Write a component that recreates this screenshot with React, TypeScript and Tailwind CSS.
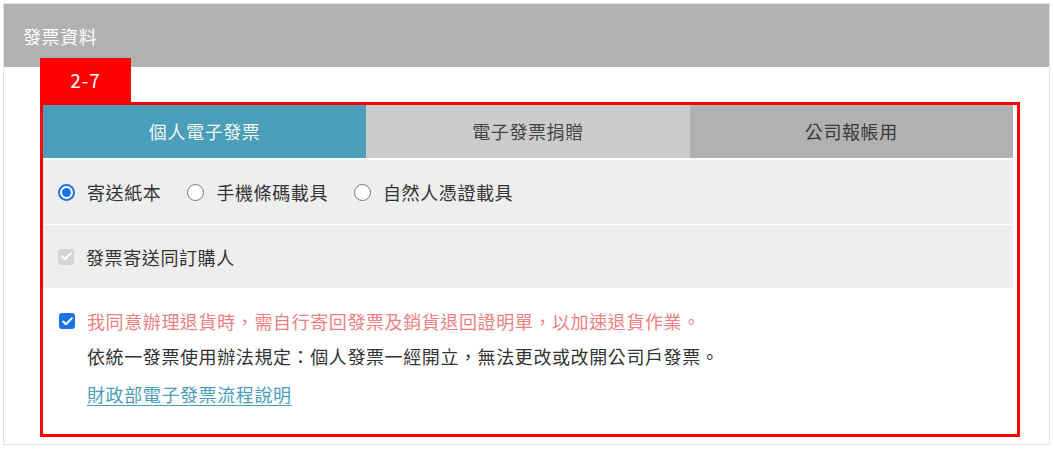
import { Check } from "lucide-react";

function Radio({ checked }: { checked?: boolean }) {
  return checked ? (
    <span className="w-[17px] h-[17px] rounded-full border-[2px] border-[#1a73e8] bg-white flex items-center justify-center flex-shrink-0">
      <span className="w-[9px] h-[9px] rounded-full bg-[#1a73e8]" />
    </span>
  ) : (
    <span className="w-[17px] h-[17px] rounded-full border border-[#767676] bg-white flex-shrink-0" />
  );
}

function Checkbox({ disabled }: { disabled?: boolean }) {
  return (
    <span
      className={`w-[16px] h-[16px] rounded-[3px] flex items-center justify-center flex-shrink-0 ${
        disabled ? "bg-[#d4d4d4]" : "bg-[#1a73e8]"
      }`}
    >
      <Check className="w-[13px] h-[13px] text-white" strokeWidth={3.5} />
    </span>
  );
}

export default function App() {
  const tabs = [
    { name: "個人電子發票", cls: "bg-[#4a9eb9] text-[#f2f7f9]" },
    { name: "電子發票捐贈", cls: "bg-[#cccccc] text-[#444444]" },
    { name: "公司報帳用", cls: "bg-[#b1b1b1] text-[#3a3a3a]" },
  ];
  const carriers = [
    { name: "寄送紙本", checked: true },
    { name: "手機條碼載具" },
    { name: "自然人憑證載具" },
  ];

  return (
    <div className="w-[1053px] h-[467px] bg-white pt-[3px] pl-[3px] font-['Noto_Sans_CJK_TC','Noto_Sans',sans-serif] text-[#333333] tracking-[0.6px]">
      <div className="w-[1047px] border border-[#e3e3e3]">
        {/* Header */}
        <div className="h-[63px] bg-[#b1b1b1] px-[19px] flex items-center">
          <h2 className="text-[18px] text-white leading-none">發票資料</h2>
        </div>

        {/* Body */}
        <div className="pt-[35px] pl-[36px] pb-[7px]">
          <div className="relative w-[980px] border-[3px] border-[#ff0000] pr-[4px]">
            <span className="absolute -left-[3px] -top-[47px] w-[91px] h-[47px] bg-[#ff0000] text-white text-[19px] tracking-[1px] flex items-center justify-center pb-[3px]">
              2-7
            </span>

            {/* Tabs */}
            <div className="flex h-[53px]">
              {tabs.map((tab) => (
                <div
                  key={tab.name}
                  className={`flex-1 flex items-center justify-center text-[18px] ${tab.cls}`}
                >
                  {tab.name}
                </div>
              ))}
            </div>

            {/* Carrier options */}
            <div className="h-[66px] border-t-[2px] border-white bg-[#eeeeee] pl-[15px] flex items-center gap-[26px]">
              {carriers.map((c) => (
                <label key={c.name} className="flex items-center gap-[12px] text-[18px] leading-none">
                  <Radio checked={c.checked} />
                  <span>{c.name}</span>
                </label>
              ))}
            </div>

            {/* Same as buyer */}
            <div className="h-[64px] border-t border-white bg-[#eeeeee] pl-[15px] flex items-center gap-[12px]">
              <Checkbox disabled />
              <span className="text-[18px] leading-none">發票寄送同訂購人</span>
            </div>

            {/* Notes */}
            <div className="pt-[19px] pb-[26px] pl-[16px]">
              <div className="flex items-center gap-[12px] h-[28px]">
                <Checkbox />
                <span className="text-[18px] text-[#f08080]">
                  我同意辦理退貨時，需自行寄回發票及銷貨退回證明單，以加速退貨作業。
                </span>
              </div>
              <p className="pl-[28px] mt-[7px] h-[28px] leading-[28px] text-[18px] text-[#333333]">
                依統一發票使用辦法規定：個人發票一經開立，無法更改或改開公司戶發票。
              </p>
              <a className="ml-[28px] mt-[10px] block w-fit h-[28px] leading-[28px] text-[18px] text-[#4a9eb9] underline underline-offset-[3px]">
                財政部電子發票流程說明
              </a>
            </div>
          </div>
        </div>
      </div>
    </div>
  );
}
